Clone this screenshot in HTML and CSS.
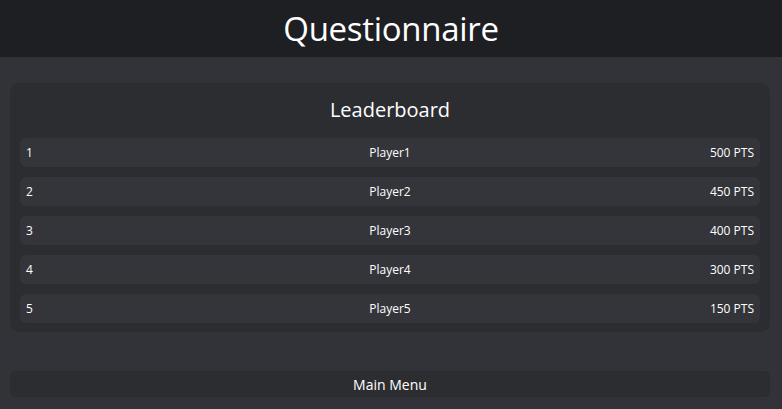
FILE: index.html
```html
<!DOCTYPE html>
<html>
<head>
<meta charset="utf-8">
<link rel="stylesheet" href="styles.css">
</head>
<body>
<header class="header"><h1 class="title">Questionnaire</h1></header>
<main class="main">
  <section class="card">
    <h2 class="card-title">Leaderboard</h2>
    <div class="rows">
      <div class="row"><span class="rank">1</span><span class="name">Player1</span><span class="pts">500 PTS</span></div>
      <div class="row"><span class="rank">2</span><span class="name">Player2</span><span class="pts">450 PTS</span></div>
      <div class="row"><span class="rank">3</span><span class="name">Player3</span><span class="pts">400 PTS</span></div>
      <div class="row"><span class="rank">4</span><span class="name">Player4</span><span class="pts">300 PTS</span></div>
      <div class="row"><span class="rank">5</span><span class="name">Player5</span><span class="pts">150 PTS</span></div>
    </div>
  </section>
  <button class="menu-btn">Main Menu</button>
</main>
</body>
</html>
```
FILE: styles.css
```css
* { box-sizing: border-box; }
html, body { margin: 0; padding: 0; }
body {
  background: #323338;
  color: #ffffff;
  font-family: "Open Sans", "Noto Sans", sans-serif;
  height: 409px;
  overflow: hidden;
}
.header {
  background: #1e1f23;
  height: 57px;
  display: flex;
  align-items: center;
  justify-content: center;
}
.title {
  margin: 0;
  font-weight: 400;
  font-size: 33px;
  letter-spacing: -0.3px;
  line-height: 1;
}
.main {
  padding: 26px 12px 0 10px;
  display: flex;
  flex-direction: column;
}
.card {
  background: #2c2d31;
  border-radius: 9px;
  padding: 10px 10px 9px;
}
.card-title {
  margin: 0;
  text-align: center;
  font-weight: 400;
  font-size: 20px;
  line-height: 34px;
  margin-bottom: 11px;
}
.rows {
  display: flex;
  flex-direction: column;
  gap: 10px;
}
.row {
  background: #34353a;
  border-radius: 6px;
  height: 29px;
  display: grid;
  grid-template-columns: 1fr auto 1fr;
  align-items: center;
  padding: 0 6px 0 6px;
  font-size: 12px;
  font-weight: 500;
}
.rank { justify-self: start; }
.name { justify-self: center; }
.pts { justify-self: end; }
.menu-btn {
  margin-top: 39px;
  height: 26px;
  border: none;
  border-radius: 6px;
  background: #2c2d31;
  color: #ffffff;
  font-family: inherit;
  font-size: 14px;
  font-weight: 500;
  padding: 0;
}
```
